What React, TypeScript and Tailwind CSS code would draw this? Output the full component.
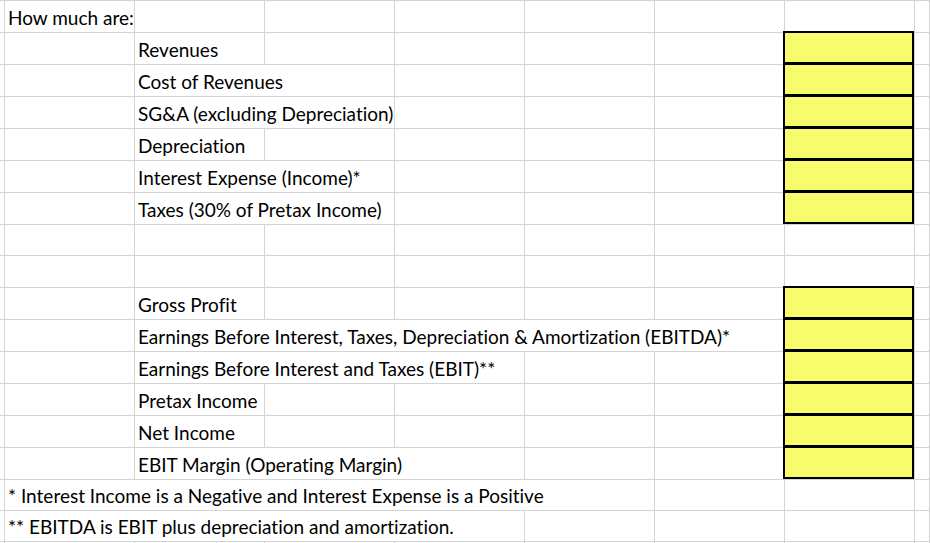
import React from "react";

// One spreadsheet row: height (incl. bottom gridline), optional label and yellow input cell
interface RowSpec {
  h: string;
  label?: string;
  col?: 1 | 2;
  span?: number;
  yellow?: boolean;
}

const rows: RowSpec[] = [
  { h: "h-[32px]", label: "How much are:", col: 1, span: 1 },
  { h: "h-[32px]", label: "Revenues", col: 2, span: 1, yellow: true },
  { h: "h-[32px]", label: "Cost of Revenues", col: 2, span: 2, yellow: true },
  { h: "h-[32px]", label: "SG&A (excluding Depreciation)", col: 2, span: 2, yellow: true },
  { h: "h-[32px]", label: "Depreciation", col: 2, span: 1, yellow: true },
  { h: "h-[32px]", label: "Interest Expense (Income)*", col: 2, span: 2, yellow: true },
  { h: "h-[32px]", label: "Taxes (30% of Pretax Income)", col: 2, span: 2, yellow: true },
  { h: "h-[31px]" },
  { h: "h-[32px]" },
  { h: "h-[32px]", label: "Gross Profit", col: 2, span: 1, yellow: true },
  {
    h: "h-[32px]",
    label: "Earnings Before Interest, Taxes, Depreciation & Amortization (EBITDA)*",
    col: 2,
    span: 5,
    yellow: true,
  },
  { h: "h-[32px]", label: "Earnings Before Interest and Taxes (EBIT)**", col: 2, span: 3, yellow: true },
  { h: "h-[32px]", label: "Pretax Income", col: 2, span: 1, yellow: true },
  { h: "h-[32px]", label: "Net Income", col: 2, span: 1, yellow: true },
  { h: "h-[32px]", label: "EBIT Margin (Operating Margin)", col: 2, span: 3, yellow: true },
  { h: "h-[31px]", label: "* Interest Income is a Negative and Interest Expense is a Positive", col: 1, span: 5 },
  { h: "h-[31px]", label: "** EBITDA is EBIT plus depreciation and amortization.", col: 1, span: 4 },
  { h: "h-[31px]" },
];

const spanClass: Record<number, string> = {
  1: "col-span-1",
  2: "col-span-2",
  3: "col-span-3",
  4: "col-span-4",
  5: "col-span-5",
};

const grid = "border-r border-b border-[#d4d4d4]";

function Row({ row }: { row: RowSpec }) {
  const cells: React.ReactNode[] = [];
  cells.push(<div key="a" className={`${grid} ${row.h}`} />);
  let c = 1;
  while (c <= 7) {
    if (row.label && c === row.col) {
      cells.push(
        <div
          key={c}
          className={`${grid} ${row.h} ${spanClass[row.span ?? 1]} flex items-end pl-[3px] pb-[3px] whitespace-nowrap text-[19px] leading-[22px] text-black [font-variant-ligatures:none]`}
        >
          {row.label}
        </div>
      );
      c += row.span ?? 1;
      continue;
    }
    if (c === 7 && row.yellow) {
      cells.push(
        <div key={c} className={`${grid} ${row.h} relative bg-[#f8fb6b]`}>
          <div className="absolute -left-[2px] -top-[2px] right-0 bottom-0 border-2 border-black" />
        </div>
      );
    } else {
      cells.push(<div key={c} className={`${grid} ${row.h}`} />);
    }
    c++;
  }
  cells.push(<div key="z" className={`${grid} ${row.h}`} />);
  return <>{cells}</>;
}

export default function App() {
  return (
    <div
      className="h-[543px] w-[930px] overflow-hidden bg-white"
      style={{ fontFamily: "Lato, 'Open Sans', sans-serif" }}
    >
      <div className="grid grid-cols-[5px_repeat(7,130px)_1fr] border-t border-[#d4d4d4]">
        {rows.map((row, i) => (
          <Row key={i} row={row} />
        ))}
      </div>
    </div>
  );
}
